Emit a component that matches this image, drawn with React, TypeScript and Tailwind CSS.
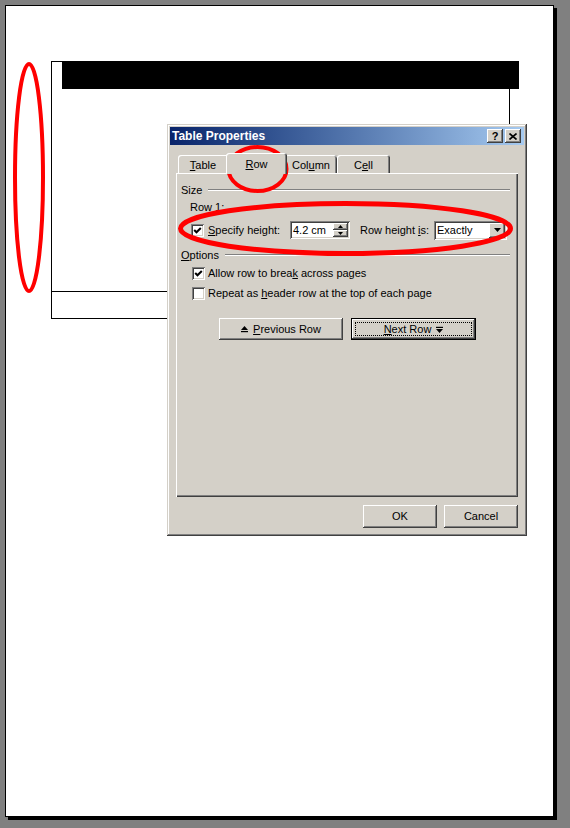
const raised =
  "bg-[#d4d0c8] shadow-[inset_-1px_-1px_#404040,inset_1px_1px_#ffffff,inset_-2px_-2px_#808080,inset_2px_2px_#d4d0c8]";
const sunken =
  "bg-white shadow-[inset_1px_1px_#808080,inset_-1px_-1px_#ffffff,inset_2px_2px_#404040,inset_-2px_-2px_#d4d0c8]";

function CheckBox({ checked }: { checked?: boolean }) {
  return (
    <div className={`w-[13px] h-[13px] shrink-0 flex items-center justify-center ${sunken}`}>
      {checked && (
        <svg width="9" height="9" viewBox="0 0 9 9">
          <polyline points="1.2,4 3.5,6.3 7.8,2" fill="none" stroke="#000" strokeWidth="2" />
        </svg>
      )}
    </div>
  );
}

function GroupLabel({ children }: { children: React.ReactNode }) {
  return (
    <div className="h-[14px] flex items-center">
      <span className="leading-[14px]">{children}</span>
      <div className="flex-1 ml-[6px] h-[2px] border-t border-t-[#808080] border-b border-b-white" />
    </div>
  );
}

export default function App() {
  return (
    <div className="relative w-[570px] h-[828px] overflow-hidden bg-[#808080] pt-[5px] pl-[5px] font-['Liberation_Sans',Arial,sans-serif] text-[11px] text-black">
      {/* Page */}
      <div className="w-[549px] h-[812px] bg-white border border-black shadow-[3px_3px_0_#000]">
        <div className="ml-[45px] mt-[55px] w-[459px] h-[258px] border border-black">
          <div className="h-[230px] flex flex-col border-b border-black">
            <div className="-mt-px ml-[10px] w-[457px] h-[28px] bg-black" />
          </div>
        </div>
      </div>

      {/* Dialog */}
      <div className="absolute left-[167px] top-[124px] w-[360px] h-[412px] p-[3px] flex flex-col bg-[#d4d0c8] shadow-[inset_-1px_-1px_#404040,inset_1px_1px_#d4d0c8,inset_-2px_-2px_#808080,inset_2px_2px_#ffffff]">
        {/* Title bar */}
        <div className="h-[18px] flex items-center justify-between pl-[2px] pr-[3px] bg-linear-to-r from-[#0a246a] to-[#a6caf0]">
          <span className="text-white font-bold text-[12px] leading-[18px]">Table Properties</span>
          <div className="flex gap-[2px]">
            <div className={`w-[16px] h-[14px] flex items-center justify-center ${raised}`}>
              <span className="font-bold text-[11px] leading-none">?</span>
            </div>
            <div className={`w-[16px] h-[14px] flex items-center justify-center ${raised}`}>
              <svg width="8" height="7" viewBox="0 0 8 7">
                <path d="M0.5 0.5L7.5 6.5M7.5 0.5L0.5 6.5" stroke="#000" strokeWidth="1.6" />
              </svg>
            </div>
          </div>
        </div>

        {/* Tabs */}
        <div className="mt-[8px] ml-[8px] h-[20px] flex items-end">
          <div className="w-[50px] h-[18px] pt-[3px] flex justify-center items-start leading-[14px] rounded-tl-[3px] shadow-[inset_1px_1px_#ffffff]">
            <span>
              <span className="underline">T</span>able
            </span>
          </div>
          <div className="relative z-10 -mx-[2px] -mb-px w-[61px] h-[21px] pt-[4px] flex justify-center items-start leading-[14px] bg-[#d4d0c8] rounded-t-[3px] shadow-[inset_1px_1px_#ffffff,inset_-1px_0_#404040,inset_-2px_0_#808080]">
            <span>
              <span className="underline">R</span>ow
            </span>
          </div>
          <div className="w-[52px] h-[18px] pt-[3px] flex justify-center items-start leading-[14px] rounded-t-[3px] shadow-[inset_0_1px_#ffffff,inset_-1px_0_#404040,inset_-2px_0_#808080]">
            <span>
              Col<span className="underline">u</span>mn
            </span>
          </div>
          <div className="w-[53px] h-[18px] pt-[3px] flex justify-center items-start leading-[14px] rounded-t-[3px] shadow-[inset_1px_1px_#ffffff,inset_-1px_0_#404040,inset_-2px_0_#808080]">
            <span>
              C<span className="underline">e</span>ll
            </span>
          </div>
        </div>

        {/* Tab panel */}
        <div className="ml-[6px] w-[342px] h-[324px] pt-[10px] pl-[5px] pr-[8px] shadow-[inset_1px_1px_#ffffff,inset_-1px_-1px_#404040,inset_-2px_-2px_#808080]">
          <GroupLabel>Size</GroupLabel>
          <div className="mt-[3px] h-[14px] pl-[9px] leading-[14px]">Row 1:</div>

          <div className="mt-[6px] h-[20px] pl-[10px] flex items-center">
            <CheckBox checked />
            <span className="ml-[4px] w-[82px] leading-[14px]">
              <span className="underline">S</span>pecify height:
            </span>
            <div className={`w-[60px] h-[18px] p-[2px] flex ${sunken}`}>
              <span className="flex-1 pl-[1px] leading-[14px]">4.2 cm</span>
              <div className="w-[15px] flex flex-col">
                <div className={`h-[7px] flex items-center justify-center ${raised}`}>
                  <svg width="5" height="3" viewBox="0 0 5 3">
                    <path d="M2.5 0L5 3H0z" fill="#000" />
                  </svg>
                </div>
                <div className={`h-[7px] flex items-center justify-center ${raised}`}>
                  <svg width="5" height="3" viewBox="0 0 5 3">
                    <path d="M0 0H5L2.5 3z" fill="#000" />
                  </svg>
                </div>
              </div>
            </div>
            <span className="ml-[10px] w-[74px] leading-[14px]">
              Row height <span className="underline">i</span>s:
            </span>
            <div className={`w-[73px] h-[19px] p-[2px] flex ${sunken}`}>
              <span className="flex-1 pl-[1px] leading-[15px]">Exactly</span>
              <div className={`w-[16px] flex items-center justify-center ${raised}`}>
                <svg width="7" height="4" viewBox="0 0 7 4">
                  <path d="M0 0H7L3.5 4z" fill="#000" />
                </svg>
              </div>
            </div>
          </div>

          <div className="mt-[8px]">
            <GroupLabel>
              <span className="underline">O</span>ptions
            </GroupLabel>
          </div>

          <div className="mt-[5px] h-[13px] pl-[11px] flex items-center">
            <CheckBox checked />
            <span className="ml-[3px] leading-[13px]">
              Allow row to brea<span className="underline">k</span> across pages
            </span>
          </div>
          <div className="mt-[7px] h-[13px] pl-[11px] flex items-center">
            <CheckBox />
            <span className="ml-[3px] leading-[13px]">
              Repeat as <span className="underline">h</span>eader row at the top of each page
            </span>
          </div>

          <div className="mt-[18px] pl-[38px] flex gap-[8px]">
            <div className={`w-[124px] h-[22px] flex items-center justify-center gap-[5px] ${raised}`}>
              <svg width="7" height="7" viewBox="0 0 7 7">
                <path d="M3.5 0L7 4H0z" fill="#000" />
                <rect x="0" y="5" width="7" height="1.2" fill="#000" />
              </svg>
              <span>
                <span className="underline">P</span>revious Row
              </span>
            </div>
            <div className="w-[125px] h-[22px] border border-black">
              <div className={`w-full h-full p-[3px] ${raised}`}>
                <div className="w-full h-full flex items-center justify-center gap-[5px] border border-dotted border-black">
                  <span>
                    <span className="underline">N</span>ext Row
                  </span>
                  <svg width="7" height="7" viewBox="0 0 7 7">
                    <rect x="0" y="0.8" width="7" height="1.2" fill="#000" />
                    <path d="M0 3H7L3.5 7z" fill="#000" />
                  </svg>
                </div>
              </div>
            </div>
          </div>
        </div>

        {/* Bottom buttons */}
        <div className="mt-[8px] pr-[6px] flex justify-end gap-[7px]">
          <div className={`w-[74px] h-[23px] flex items-center justify-center ${raised}`}>OK</div>
          <div className={`w-[74px] h-[23px] flex items-center justify-center ${raised}`}>Cancel</div>
        </div>
      </div>

      {/* Red annotation marks */}
      <svg className="absolute inset-0 pointer-events-none" width="570" height="828" viewBox="0 0 570 828">
        <ellipse cx="29" cy="177.5" rx="14" ry="113.5" fill="none" stroke="#ff0000" strokeWidth="4" />
        <ellipse cx="257.5" cy="169" rx="29" ry="22" fill="none" stroke="#ff0000" strokeWidth="4" />
        <ellipse cx="345.5" cy="228.5" rx="165" ry="25" fill="none" stroke="#ff0000" strokeWidth="5" />
      </svg>
    </div>
  );
}
